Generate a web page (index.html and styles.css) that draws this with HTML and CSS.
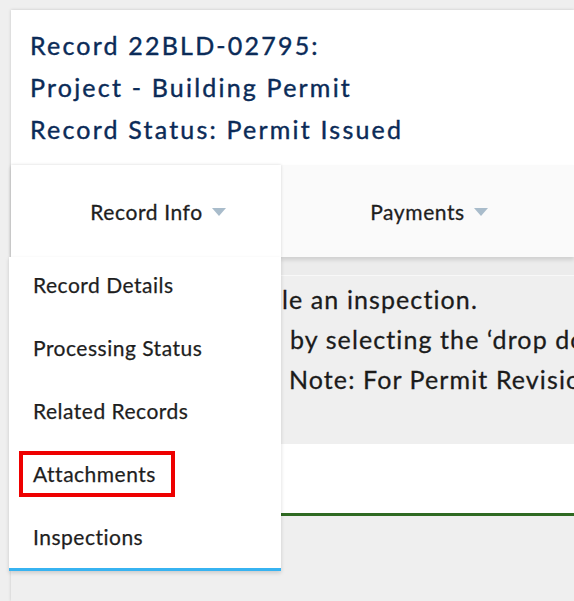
FILE: index.html
```html
<!DOCTYPE html>
<html>
<head>
<meta charset="utf-8">
<link rel="stylesheet" href="styles.css">
</head>
<body>
<div class="page">
  <div class="card">
    <div class="header">
      <div class="title">Record 22BLD-02795:</div>
      <div class="title">Project - Building Permit</div>
      <div class="title">Record Status: Permit Issued</div>
    </div>
    <div class="tabs">
      <div class="tab active">
        <span class="label">Record Info</span><span class="caret"></span>
        <ul class="menu">
          <li class="item">Record Details</li>
          <li class="item">Processing Status</li>
          <li class="item">Related Records</li>
          <li class="item"><span class="mark">Attachments</span></li>
          <li class="item">Inspections</li>
        </ul>
      </div>
      <div class="tab wide">
        <span class="label">Payments</span><span class="caret"></span>
      </div>
    </div>
    <div class="band"></div>
    <div class="notice">
      <div class="line l1"><span class="lead">Schedu</span><span>le an inspection.</span></div>
      <div class="line l2"><span class="lead gap">Go</span><span>by selecting the ‘drop down’ arrow.</span></div>
      <div class="line l3"><span class="lead gap">*</span><span>Note: For Permit Revisions, use Attachments.</span></div>
    </div>
    <div class="panel"></div>
    <div class="rest"></div>
  </div>
</div>
</body>
</html>
```

FILE: styles.css
```css
html, body {
  margin: 0;
  padding: 0;
}
body {
  background: #efefef;
  font-family: Lato, "Open Sans", sans-serif;
  width: 574px;
  height: 601px;
  overflow: hidden;
}
.page {
  padding: 10px 0 0 11px;
}
.card {
  background: #ffffff;
  box-shadow: 0 0 3px rgba(0, 0, 0, 0.18);
}
.header {
  padding: 14px 0 15px 19px;
}
.title {
  font-size: 25px;
  line-height: 42px;
  letter-spacing: 2.2px;
  color: #0b2b58;
  white-space: nowrap;
  -webkit-text-stroke: 0.4px #0b2b58;
}
.tabs {
  display: flex;
  height: 92px;
  position: relative;
  background: #fafafa;
  box-shadow: 0 3px 4px rgba(0, 0, 0, 0.12);
  z-index: 2;
}
.tab {
  width: 270px;
  flex: none;
  display: flex;
  align-items: center;
  justify-content: center;
  font-size: 21px;
  letter-spacing: 0.6px;
  color: #1e1e1e;
  -webkit-text-stroke: 0.3px #1e1e1e;
  background: #fafafa;
  position: relative;
}
.tab::before {
  content: "";
  width: 24px;
  flex: none;
}
.tab.wide {
  width: 272px;
}
.tab.active {
  background: #ffffff;
  box-shadow: 0 0 3px rgba(0, 0, 0, 0.15);
  z-index: 3;
}
.caret {
  width: 0;
  height: 0;
  margin-left: 9px;
  margin-top: 2px;
  border-left: 7.5px solid transparent;
  border-right: 7.5px solid transparent;
  border-top: 8px solid #a9bccb;
}
.menu {
  list-style: none;
  margin: 0;
  padding: 0;
  position: absolute;
  top: 100%;
  left: -2px;
  width: 272px;
  background: #ffffff;
  border-bottom: 3px solid #37b3f1;
  box-shadow: 0 2px 4px rgba(0, 0, 0, 0.15);
  z-index: 5;
  letter-spacing: 0.5px;
}
.item {
  height: 63px;
  line-height: 55px;
  padding-left: 24px;
  font-size: 21px;
  color: #1e1e1e;
  -webkit-text-stroke: 0.25px #1e1e1e;
  white-space: nowrap;
}
.item:last-child {
  height: 59px;
}
.mark {
  display: inline-block;
  line-height: 38px;
  margin-left: -14px;
  padding: 0 15px 0 10px;
  border: 4px solid #ee0000;
}
.band {
  height: 18px;
  background: #ececec;
}
.notice {
  height: 165px;
  padding-top: 3px;
  background: #efefef;
  border-top: 1px solid #f8f8f8;
  overflow: hidden;
}
.line {
  display: flex;
  white-space: nowrap;
  font-size: 25px;
  letter-spacing: 1.1px;
  line-height: 40px;
  color: #1b1b1b;
  -webkit-text-stroke: 0.3px #1b1b1b;
}
.lead {
  flex: none;
  overflow: hidden;
  text-align: right;
  box-sizing: border-box;
}
.lead.gap {
  padding-right: 16px;
}
.l1 .lead { width: 271px; }
.l2 .lead { width: 279px; }
.l3 .lead { width: 278px; }
.panel {
  height: 69px;
  background: #ffffff;
  border-bottom: 3px solid #2f6a22;
}
.rest {
  height: 85px;
  background: #efefef;
}
```
